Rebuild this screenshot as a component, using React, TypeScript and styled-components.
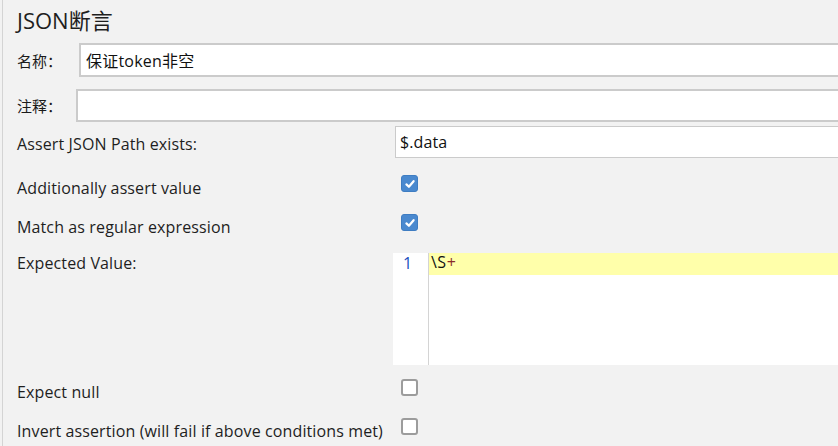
import React from 'react'
import styled, { createGlobalStyle } from 'styled-components'

const GlobalStyle = createGlobalStyle`
  html, body {
    margin: 0;
    padding: 0;
    background: #f2f2f2;
    overflow: hidden;
  }
  body {
    font-family: "Open Sans", "Noto Sans CJK SC", sans-serif;
    color: #1a1a1a;
  }
`

const App = () => {
  return (
    <>
      <GlobalStyle />
      <Panel>
        <Title>JSON断言</Title>

        <NameRow top={3} height={34}>
          <NameLabel width={76}>名称：</NameLabel>
          <TextBox>保证token非空</TextBox>
        </NameRow>

        <NameRow top={12} height={33}>
          <NameLabel width={73}>注释：</NameLabel>
          <TextBox />
        </NameRow>

        <FieldRow height={32} top={4}>
          <FieldLabel shift={2}>Assert JSON Path exists:</FieldLabel>
          <PathBox>$.data</PathBox>
        </FieldRow>

        <FieldRow height={39} top={6}>
          <FieldLabel shift={4}>Additionally assert value</FieldLabel>
          <CheckBox checked>
            <CheckMark />
          </CheckBox>
        </FieldRow>

        <FieldRow height={39} top={0}>
          <FieldLabel shift={4}>Match as regular expression</FieldLabel>
          <CheckBox checked>
            <CheckMark />
          </CheckBox>
        </FieldRow>

        <EditorRow>
          <EditorLabel>Expected Value:</EditorLabel>
          <Editor>
            <Gutter>
              <LineNumber>1</LineNumber>
            </Gutter>
            <Code>
              <CurrentLine>
                \S<Plus>+</Plus>
              </CurrentLine>
            </Code>
          </Editor>
        </EditorRow>

        <FieldRow height={39} top={3}>
          <FieldLabel shift={4}>Expect null</FieldLabel>
          <CheckBox />
        </FieldRow>

        <FieldRow height={39} top={0}>
          <FieldLabel shift={4}>Invert assertion (will fail if above conditions met)</FieldLabel>
          <CheckBox />
        </FieldRow>
      </Panel>
    </>
  )
}

export default App

const CheckMark = () => (
  <svg width="12" height="12" viewBox="0 0 12 12">
    <path d="M2.4 6.4 L4.9 8.8 L9.6 3.2" fill="none" stroke="#ffffff" strokeWidth="2.2" strokeLinecap="round" strokeLinejoin="round" />
  </svg>
)

const Panel = styled.div`
  width: 836px;
  height: 446px;
  margin-left: 2px;
  border-left: 1px solid #d4d4d4;
  box-sizing: border-box;
`

const Title = styled.div`
  height: 40px;
  padding-left: 14px;
  font-size: 22px;
  line-height: 40px;
  color: #1e1e1e;
`

const NameRow = styled.div<{ top: number; height: number }>`
  display: flex;
  align-items: center;
  margin-top: ${({ top }) => top}px;
  height: ${({ height }) => height}px;
`

const NameLabel = styled.div<{ width: number }>`
  width: ${({ width }) => width}px;
  padding-left: 14px;
  box-sizing: border-box;
  font-family: "Noto Sans CJK SC", sans-serif;
  font-size: 15px;
  flex-shrink: 0;
`

const TextBox = styled.div`
  flex: 1;
  height: 100%;
  box-sizing: border-box;
  background: #ffffff;
  border: 2px solid #cbcbcb;
  border-right: none;
  padding: 0 5px;
  display: flex;
  align-items: center;
  font-family: "Open Sans", "Noto Sans CJK SC", sans-serif;
  font-size: 16px;
  letter-spacing: 0.2px;
  color: #111;
`

const FieldRow = styled.div<{ height: number; top: number }>`
  display: grid;
  grid-template-columns: 392px 1fr;
  align-items: center;
  height: ${({ height }) => height}px;
  margin-top: ${({ top }) => top}px;
`

const FieldLabel = styled.div<{ shift: number }>`
  padding-left: 14px;
  padding-top: ${({ shift }) => shift * 2}px;
  font-size: 16px;
  letter-spacing: 0.12px;
  color: #1e1e1e;
  white-space: nowrap;
`

const PathBox = styled.div`
  height: 32px;
  box-sizing: border-box;
  background: #ffffff;
  border: 1px solid #cbcbcb;
  border-right: none;
  padding: 0 4px;
  display: flex;
  align-items: center;
  font-size: 16px;
  letter-spacing: 0.12px;
  color: #111;
`

const CheckBox = styled.div<{ checked?: boolean }>`
  width: 17px;
  height: 17px;
  margin-left: 6px;
  box-sizing: border-box;
  border-radius: 3px;
  display: flex;
  align-items: center;
  justify-content: center;
  background: ${({ checked }) => (checked ? '#4a89cf' : '#ffffff')};
  border: ${({ checked }) => (checked ? '1px solid #3f7dc2' : '2px solid #9c9c9c')};
`

const EditorRow = styled.div`
  display: grid;
  grid-template-columns: 390px 1fr;
  height: 112px;
  margin-top: 11px;
`

const EditorLabel = styled.div`
  padding: 0 0 0 14px;
  font-size: 16px;
  letter-spacing: 0.12px;
  line-height: 20px;
  color: #1e1e1e;
`

const Editor = styled.div`
  display: flex;
  background: #ffffff;
`

const Gutter = styled.div`
  width: 36px;
  flex-shrink: 0;
  box-sizing: border-box;
  padding-right: 6px;
  border-right: 1px solid #d4d4d4;
  text-align: center;
`

const LineNumber = styled.div`
  font-size: 16px;
  line-height: 20px;
  color: #1b4fc0;
`

const Code = styled.div`
  flex: 1;
`

const CurrentLine = styled.div`
  height: 22px;
  background: #ffffaa;
  padding-left: 2px;
  font-size: 16px;
  line-height: 18px;
  letter-spacing: 0.5px;
  color: #111;
`

const Plus = styled.span`
  color: #8a2a2a;
`
